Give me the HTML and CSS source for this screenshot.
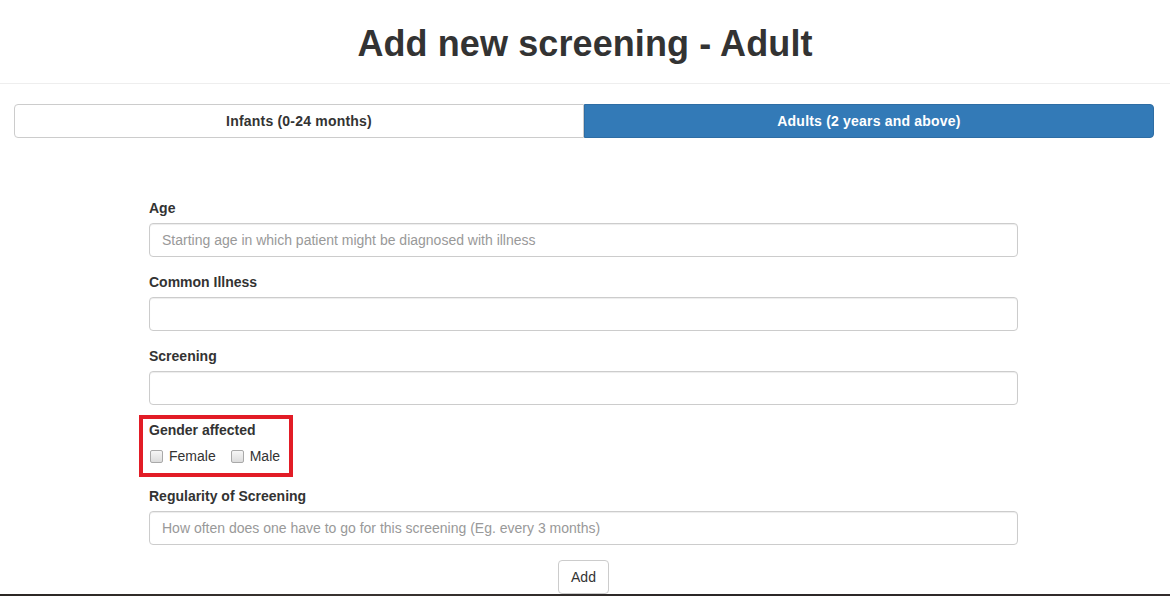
FILE: index.html
```html
<!DOCTYPE html>
<html lang="en">
<head>
<meta charset="utf-8">
<title>Add new screening - Adult</title>
<link rel="stylesheet" href="styles.css">
</head>
<body>
<header class="page-header">
  <h1 class="title">Add new screening - Adult</h1>
</header>
<div class="tabs">
  <button class="tab">Infants (0-24 months)</button>
  <button class="tab tab-active">Adults (2 years and above)</button>
</div>
<form class="form">
  <div class="group">
    <label class="label" for="age">Age</label>
    <input class="field" id="age" type="text" placeholder="Starting age in which patient might be diagnosed with illness">
  </div>
  <div class="group">
    <label class="label" for="illness">Common Illness</label>
    <input class="field" id="illness" type="text">
  </div>
  <div class="group group-tight">
    <label class="label" for="screening">Screening</label>
    <input class="field" id="screening" type="text">
  </div>
  <div class="highlight">
    <div class="label label-gender">Gender affected</div>
    <div class="checks">
      <label class="check"><input class="box" type="checkbox"><span>Female</span></label>
      <label class="check"><input class="box" type="checkbox"><span>Male</span></label>
    </div>
  </div>
  <div class="group">
    <label class="label" for="regularity">Regularity of Screening</label>
    <input class="field" id="regularity" type="text" placeholder="How often does one have to go for this screening (Eg. every 3 months)">
  </div>
  <div class="actions">
    <button class="btn" type="button">Add</button>
  </div>
</form>
<div class="strip"></div>
</body>
</html>
```

FILE: styles.css
```css
* { box-sizing: border-box; }
html, body { margin: 0; padding: 0; background: #fff; }
body {
  font-family: "Liberation Sans", Arial, Helvetica, sans-serif;
  font-size: 14px;
  line-height: 20px;
  color: #333;
  height: 596px;
  overflow: hidden;
}
.page-header {
  height: 84px;
  padding-top: 24px;
  border-bottom: 1px solid #eee;
  text-align: center;
}
.title {
  margin: 0;
  font-size: 36px;
  line-height: 40px;
  font-weight: bold;
  color: #333;
  letter-spacing: 0.1px;
}
.tabs {
  display: flex;
  width: 1140px;
  margin: 20px 0 0 14px;
}
.tab {
  flex: 1;
  height: 34px;
  border: 1px solid #ccc;
  background: #fff;
  color: #333;
  font-family: inherit;
  font-size: 14px;
  font-weight: bold;
  padding: 0;
  letter-spacing: 0.2px;
}
.tabs .tab:first-child { border-radius: 4px 0 0 4px; }
.tab-active {
  background: #337ab7;
  border-color: #2e6da4;
  color: #fff;
  border-radius: 0 4px 4px 0;
}
.form {
  width: 869px;
  margin: 60px 0 0 149px;
}
.group { margin-bottom: 15px; }
.group-tight { margin-bottom: 10px; }
.label {
  display: block;
  font-weight: bold;
  margin-bottom: 5px;
}
.field {
  display: block;
  width: 100%;
  height: 34px;
  padding: 6px 12px;
  border: 1px solid #ccc;
  border-radius: 4px;
  font-family: inherit;
  font-size: 14px;
  color: #555;
  box-shadow: inset 0 1px 1px rgba(0,0,0,.075);
}
.field::placeholder { color: #999; }
.highlight {
  width: 154px;
  margin-left: -10px;
  border: 4px solid #e21c26;
  padding: 1px 0 7px 6px;
  margin-bottom: 9px;
}
.label-gender { margin-bottom: 6px; }
.checks {
  display: flex;
  gap: 14px;
  height: 20px;
  align-items: center;
}
.check {
  display: flex;
  align-items: center;
  gap: 6px;
  font-weight: normal;
}
.box {
  -webkit-appearance: none;
  appearance: none;
  width: 13px;
  height: 13px;
  margin: 1px 0 0 1px;
  border: 1px solid #a9a9a9;
  border-radius: 2px;
  background: linear-gradient(#f6f6f6, #dcdcdc);
}
.actions {
  display: flex;
  justify-content: center;
}
.btn {
  height: 34px;
  padding: 6px 12px;
  border: 1px solid #ccc;
  border-radius: 4px;
  background: #fff;
  color: #333;
  font-family: inherit;
  font-size: 14px;
}
.strip {
  height: 2px;
  background: linear-gradient(90deg, #2b2724, #3a3431 30%, #2a2626 60%, #332c2c);
}
```
